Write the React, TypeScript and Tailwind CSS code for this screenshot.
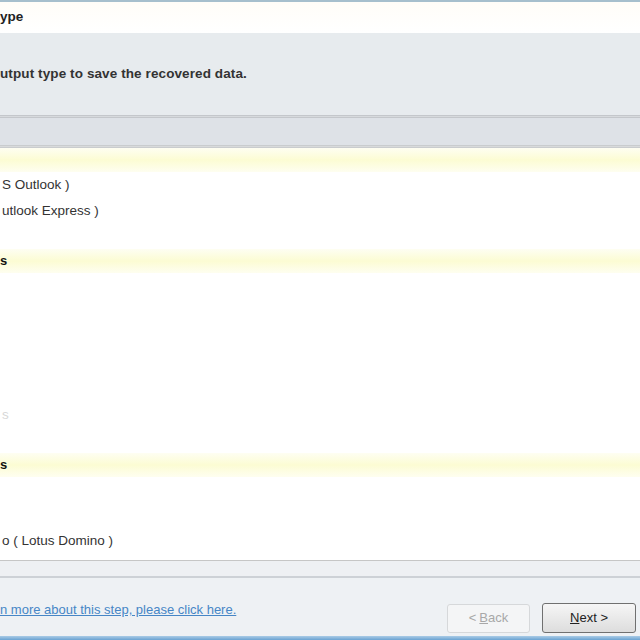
const GROUPS: { title: string; rows: { text: string; faded?: boolean }[] }[] = [
  {
    title: '',
    rows: [{ text: 'S Outlook )' }, { text: 'utlook Express )' }, { text: '' }],
  },
  {
    title: 's',
    rows: [
      { text: '' },
      { text: '' },
      { text: '' },
      { text: '' },
      { text: '' },
      { text: 's', faded: true },
      { text: '' },
    ],
  },
  {
    title: 's',
    rows: [{ text: '' }, { text: '' }, { text: 'o ( Lotus Domino )' }],
  },
];

function GroupHeader({ title }: { title: string }) {
  return (
    <div className="flex h-[24px] items-center bg-gradient-to-b from-[#fefef2] via-[#fcfcd3] to-[#fefef0] text-[13px] font-bold text-[#111]">
      {title}
    </div>
  );
}

export default function App() {
  return (
    <div
      className="flex h-[640px] w-[640px] flex-col overflow-hidden bg-white"
      style={{ fontFamily: '"Liberation Sans", Arial, sans-serif' }}
    >
      <div className="h-[2px] bg-[#a6bfcd]" />
      <div className="flex h-[31px] items-center bg-gradient-to-b from-[#fffdf8] to-white text-[13.5px] font-bold text-[#222]">
        ype
      </div>
      <div className="flex h-[82px] items-center bg-[#e7ebee] text-[13.5px] font-bold tracking-[0.1px] text-[#333]">
        utput type to save the recovered data.
      </div>
      <div className="h-[3px] border-y border-[#c4c7cb] bg-[#d7dadd]" />
      <div className="h-[27px] bg-[#dee2e7]" />
      <div className="h-[3px] border-y border-[#c9ccce] bg-[#d8dadb]" />

      <div className="flex h-[412px] flex-col bg-white">
        {GROUPS.map((group, i) => (
          <div key={i} className="flex flex-col">
            <GroupHeader title={group.title} />
            {group.rows.map((row, j) => (
              <div
                key={j}
                className={`flex h-[25.7px] items-center pl-[2px] pt-[1px] text-[13.5px] ${
                  row.faded ? 'text-[#d8d8d8]' : 'text-[#333]'
                }`}
              >
                {row.text}
              </div>
            ))}
          </div>
        ))}
      </div>

      <div className="h-[1px] bg-[#c6c6c6]" />
      <div className="h-[15px] bg-[#eef0f3]" />
      <div className="h-[2px] bg-[#cdd1d6]" />
      <div className="flex flex-1 items-start justify-between bg-[#eef1f4] pr-[4px]">
        <a className="mt-[22px] text-[13px] text-[#4686c6] underline">n more about this step, please click here.</a>
        <div className="mt-[25px] flex items-center gap-[12px]">
          <button
            type="button"
            className="flex h-[29px] w-[83px] items-center justify-center rounded-[3px] border border-[#d6d8da] bg-[#f4f5f6] text-[13px] text-[#a8a8a8]"
          >
            &lt; <span className="ml-[3px] underline">B</span>ack
          </button>
          <button
            type="button"
            className="flex h-[30px] w-[94px] items-center justify-center rounded-[3px] border border-[#707070] bg-gradient-to-b from-[#f6f6f6] to-[#dddddd] text-[13px] text-[#222]"
          >
            <span className="underline">N</span>ext &gt;
          </button>
        </div>
      </div>
      <div className="h-[4px] bg-gradient-to-b from-[#a9cbe6] to-[#6aa3d2]" />
    </div>
  );
}
